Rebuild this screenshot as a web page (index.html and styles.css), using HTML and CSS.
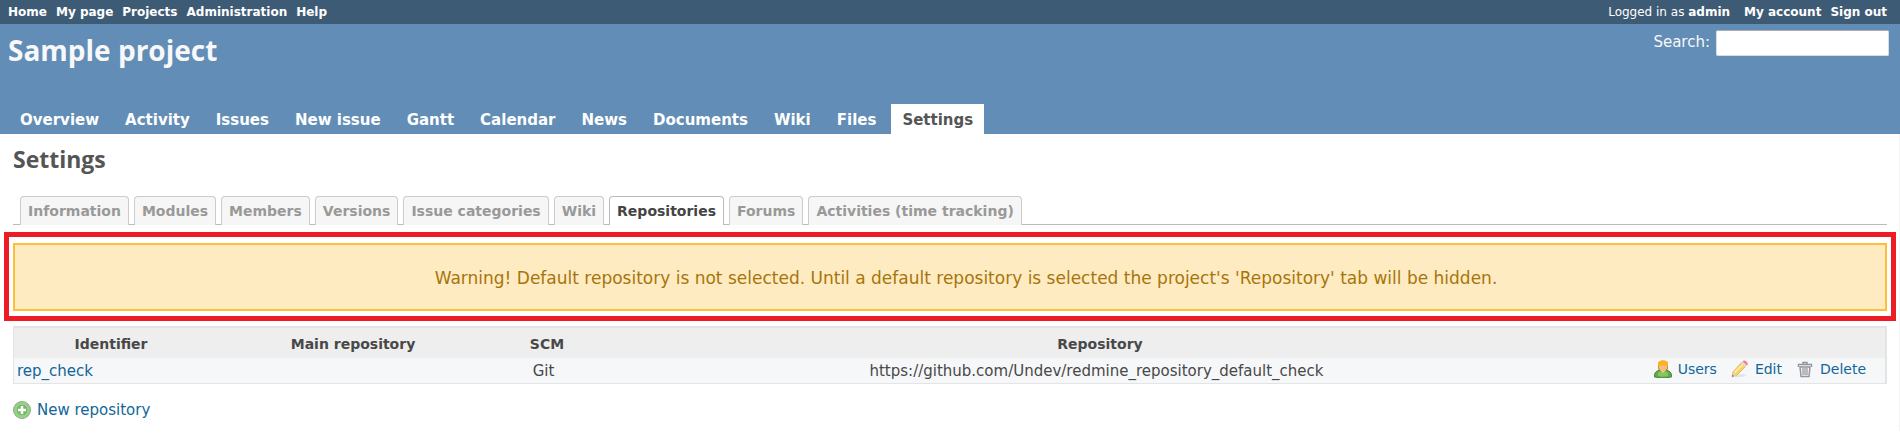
FILE: index.html
```html
<!DOCTYPE html>
<html lang="en">
<head>
<meta charset="utf-8">
<title>Settings - Sample project</title>
<link rel="stylesheet" href="styles.css">
</head>
<body>
<nav class="top-menu">
  <ul class="top-links">
    <li><a href="#">Home</a></li>
    <li><a href="#">My page</a></li>
    <li><a href="#">Projects</a></li>
    <li><a href="#">Administration</a></li>
    <li><a href="#">Help</a></li>
  </ul>
  <div class="account">
    <span class="logged-as">Logged in as <a href="#">admin</a></span>
    <ul class="top-links">
      <li><a href="#">My account</a></li>
      <li><a href="#">Sign out</a></li>
    </ul>
  </div>
</nav>
<header class="header">
  <div class="header-top">
    <h1 class="project-name">Sample project</h1>
    <form class="search">
      <label for="q">Search:</label>
      <input class="search-input" id="q" type="text">
    </form>
  </div>
  <nav class="main-menu">
    <a href="#">Overview</a>
    <a href="#">Activity</a>
    <a href="#">Issues</a>
    <a href="#">New issue</a>
    <a href="#">Gantt</a>
    <a href="#">Calendar</a>
    <a href="#">News</a>
    <a href="#">Documents</a>
    <a href="#">Wiki</a>
    <a href="#">Files</a>
    <a href="#" class="selected">Settings</a>
  </nav>
</header>
<main class="content">
  <h2 class="page-title">Settings</h2>
  <nav class="tabs">
    <a href="#">Information</a>
    <a href="#">Modules</a>
    <a href="#">Members</a>
    <a href="#">Versions</a>
    <a href="#">Issue categories</a>
    <a href="#">Wiki</a>
    <a href="#" class="selected">Repositories</a>
    <a href="#">Forums</a>
    <a href="#">Activities (time tracking)</a>
  </nav>
  <div class="highlight">
    <p class="warning">Warning! Default repository is not selected. Until a default repository is selected the project's 'Repository' tab will be hidden.</p>
  </div>
  <table class="list">
    <colgroup>
      <col class="col-identifier">
      <col class="col-main">
      <col class="col-scm">
      <col class="col-repository">
      <col class="col-actions">
    </colgroup>
    <thead>
      <tr><th>Identifier</th><th>Main repository</th><th>SCM</th><th>Repository</th><th></th></tr>
    </thead>
    <tbody>
      <tr>
        <td class="identifier"><a href="#">rep_check</a></td>
        <td></td>
        <td>Git</td>
        <td>https://github.com/Undev/redmine_repository_default_check</td>
        <td class="buttons">
          <div class="actions">
            <a class="icon-link" href="#">
              <svg class="icon" viewBox="0 0 18 18" aria-hidden="true">
                <path d="M4 9V4Q4 0.500 9 0.500Q14 0.500 14 4V9L12 11H6Z" fill="#e08f1c"/>
                <path d="M0.500 17V15Q1 11 6 10H12Q17 11 17.500 15V17Q9 19 0.500 17Z" fill="#62aa45" stroke="#4d8a35"/>
                <path d="M4 16Q9 17 14 16V13L11 11H7L4 13Z" fill="#83c765"/>
                <path d="M6 10L9 13 12 10Z" fill="#f3c18b"/>
                <path d="M5 5H13V8Q12 11 9 11Q6 11 5 8Z" fill="#f2bd84"/>
                <path d="M4 6V4Q4 0.500 9 0.500Q14 0.500 14 4V6Q11 6 9 5Q7 6 4 6Z" fill="#f9b51e"/>
              </svg>Users</a>
            <a class="icon-link" href="#">
              <svg class="icon" viewBox="0 0 18 18" aria-hidden="true">
                <path d="M3 17Q11 18 16 15L9 14Z" fill="#e3e3e3"/>
                <path d="M1 17L2 12 11 2 15 6 6 15Z" fill="#f7d568" stroke="#d5a94c" stroke-width="0.800"/>
                <path d="M3 12L12 3 13 4 4 13Z" fill="#fff0a8"/>
                <path d="M1 17L2 12 6 15Z" fill="#ecd3ad"/>
                <path d="M1 17L1.500 14.500 3 16Z" fill="#777777"/>
                <path d="M10 3L12 1 16 5 14 7Z" fill="#dcdce0"/>
                <path d="M11.500 1.500Q13 -0.500 15.500 1.500Q18 4 16 5.500Z" fill="#f08389"/>
              </svg>Edit</a>
            <a class="icon-link" href="#">
              <svg class="icon" viewBox="0 0 18 18" aria-hidden="true">
                <path d="M4 7H14L13 16.500H5Z" fill="#f4f4f6" stroke="#93939d" stroke-width="1.400"/>
                <path d="M7 8V15M9 8V15M11 8V15" fill="none" stroke="#93939d" stroke-width="1.200"/>
                <path d="M2.500 7V4.500H15.500V7M7 4V2.500H11V4" fill="none" stroke="#93939d" stroke-width="1.400"/>
                <path d="M3 5.500H15" stroke="#dcdce0"/>
              </svg>Delete</a>
          </div>
        </td>
      </tr>
    </tbody>
  </table>
  <p class="new-item"><a class="icon-link" href="#">
    <svg class="icon" viewBox="0 0 18 18" aria-hidden="true">
      <circle cx="9" cy="9" r="8.500" fill="#9ccb92" stroke="#86b57c"/>
      <circle cx="9" cy="9" r="6" fill="#72bb60" stroke="#a6d59c"/>
      <path d="M9 5V13M5 9H13" stroke="#ffffff" stroke-width="2.500"/>
    </svg>New repository</a></p>
</main>
</body>
</html>
```
FILE: styles.css
```css
* { box-sizing: border-box; }
body {
  margin: 0;
  font: 15px/18px Verdana, "DejaVu Sans", sans-serif;
  color: #484848;
  background: #ffffff;
}
a { color: #116699; text-decoration: none; }
ul, p, h1, h2 { margin: 0; padding: 0; }
ul { list-style: none; }

.top-menu {
  display: flex;
  justify-content: space-between;
  height: 24px;
  padding: 0 13px 0 8px;
  background: #3e5b76;
  color: #ffffff;
  font-size: 12px;
  line-height: 24px;
}
.top-menu a { color: #ffffff; font-weight: bold; }
.top-links { display: flex; gap: 9px; }
.account { display: flex; gap: 14px; }

.header {
  display: flex;
  flex-direction: column;
  justify-content: space-between;
  height: 110px;
  background: #628db6;
  color: #f8f8f8;
}
.header-top {
  display: flex;
  justify-content: space-between;
  align-items: flex-start;
  padding: 6px 11px 0 8px;
}
.project-name {
  font: bold 28px/40px "Trebuchet MS", "Open Sans", sans-serif;
}
.search { display: flex; gap: 6px; line-height: 24px; }
.search-input {
  width: 173px;
  height: 26px;
  padding: 3px;
  border: 1px solid #d5dde5;
  border-top-color: #abadb3;
  border-radius: 2px;
  background: #ffffff;
  font: inherit;
}
.main-menu { display: flex; gap: 4px; padding-left: 9px; }
.main-menu a {
  padding: 7px 11px 5px;
  color: #ffffff;
  font-weight: bold;
}
.main-menu .selected { background: #ffffff; color: #555555; }

.content { padding: 8px 12px 8px 13px; border-right: 1px solid #f3f3f3; }
.page-title {
  font: bold 23px/34px "Trebuchet MS", "Open Sans", sans-serif;
  color: #555555;
}
.tabs {
  display: flex;
  gap: 5px;
  margin-top: 20px;
  padding-left: 7px;
  border-bottom: 1px solid #bbbbbb;
  font-size: 14px;
}
.tabs a {
  height: 29px;
  margin-bottom: -1px;
  padding: 5px 7px;
  border: 1px solid #cccccc;
  border-bottom: 0;
  border-radius: 4px 4px 0 0;
  background: #f6f6f6;
  color: #999999;
  font-weight: bold;
}
.tabs .selected { border-color: #bbbbbb; background: #ffffff; color: #444444; }

.highlight {
  margin: 7px -9px 5px;
  padding: 6px 4px 5px;
  border: 5px solid #ed1c24;
}
.warning {
  padding: 24px 8px 22px 40px;
  border: 2px solid #fdbf3b;
  background: #ffebc1;
  color: #a6750c;
  font-size: 17px;
  text-align: center;
}

.list {
  width: 100%;
  table-layout: fixed;
  border-collapse: separate;
  border-spacing: 0;
  border: 1px solid #e4e4e4;
  border-top-width: 2px;
  border-right-width: 2px;
}
.col-identifier { width: 194px; }
.col-main { width: 290px; }
.col-scm { width: 98px; }
.col-actions { width: 281px; }
.list th { padding: 7px 3px 5px; background: #eeeeee; font-size: 14px; }
.list td { padding: 4px 10px 3px 3px; background: #f6f7f9; text-align: center; }
.list .identifier { text-align: left; }
.list .buttons { padding: 2px 3px 5px; font-size: 14px; }
.actions { display: flex; justify-content: flex-end; gap: 14px; padding-right: 16px; }
.icon-link { display: inline-flex; align-items: center; gap: 6px; }
.icon { width: 18px; height: 18px; }
.new-item { margin-top: 17px; }
```
